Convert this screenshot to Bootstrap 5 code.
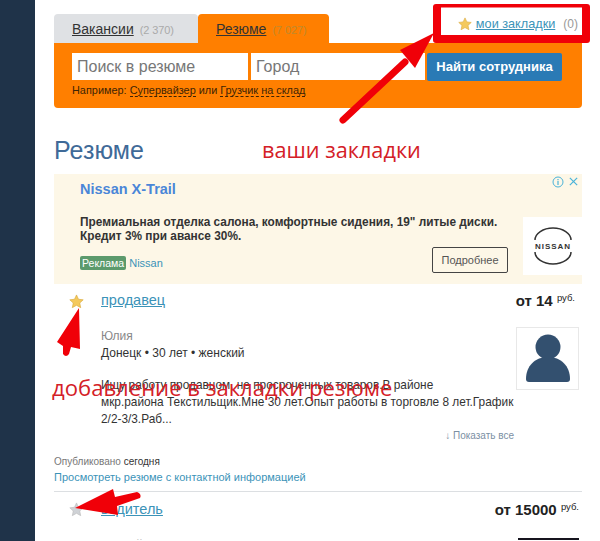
<!DOCTYPE html>
<html lang="ru">
<head>
  <meta charset="UTF-8" />
  <meta name="viewport" content="width=device-width, initial-scale=1" />
  <title>Резюме</title>
  <link href="https://cdn.jsdelivr.net/npm/bootstrap@5.3.0/dist/css/bootstrap.min.css" rel="stylesheet" />
  <style>
    html, body { height: 541px; overflow: hidden; }
    body { font-family: "Liberation Sans", Arial, sans-serif; font-size: 12px; color: #333; background: #fff; position: relative; }
    a { color: #3b93b8; }
    .side-strip { width: 35px; height: 541px; background: #1f3349; flex-shrink: 0; }
    .page-main { width: 528px; margin-left: 19px; padding-top: 14px; }
    .tab-row { height: 29px; }
    .tab-item { height: 29px; border-radius: 4px 4px 0 0; font-size: 14px; padding-top: 5px; color: #333; }
    .tab-grey { width: 144px; background: #dfe1e4; padding-left: 18px; }
    .tab-orange { width: 131px; background: #ff7f00; padding-left: 18px; }
    .tab-item a { color: #333; }
    .tab-num { font-size: 11px; color: #aaa; margin-left: 6px; letter-spacing: -.1px; }
    .tab-orange .tab-num { color: #c08a2c; }
    .bookmarks-link { margin-left: auto; padding: 2px 4px 0 0; font-size: 12.7px; line-height: 17px; height: 20px; }
    .bookmarks-link span { color: #999; margin-left: 8px; font-size: 12px; }
    .search-panel { background: #ff7f00; height: 65px; border-radius: 0 0 4px 4px; padding: 10px 20px 0 18px; }
    .search-input { width: 176px; height: 27px; padding: 0 5px; border: 0; border-radius: 0; font-size: 16px; background: #fff; }
    .search-input::placeholder { color: #777; }
    .search-input.city-input { width: 174px; margin-left: 3px; }
    .search-btn { width: 136px; height: 28px; margin-left: 2px; padding: 0; border: 0; border-radius: 2px; background: #2a7ab5; color: #fff; font-size: 13px; font-weight: 700; }
    .search-hint { font-size: 10.9px; color: #3d2405; margin-top: 2px; line-height: 14px; }
    .search-hint a { color: #3d2405; text-decoration: none; border-bottom: 1px dashed #3d2405; }
    .page-title { font-size: 25px; line-height: 30px; color: #3f6a98; margin: 27px 0 9px; font-weight: 400; }
    .ad-box { height: 110px; background: #fdf7e7; position: relative; padding: 6px 0 0 26px; }
    .ad-title { font-size: 14.5px; font-weight: 700; color: #4a86d8; line-height: 18px; }
    .ad-text { font-size: 11.85px; font-weight: 700; color: #333; line-height: 14px; margin-top: 17px; }
    .ad-foot { margin-top: 14px; line-height: 13px; font-size: 11px; }
    .ad-label { background: #5c9a6c; color: #fff; font-size: 10.5px; padding: 1px 2px; border-radius: 2px; }
    .ad-more { position: absolute; left: 378px; top: 73px; width: 76px; height: 26px; padding: 0; background: transparent; border: 1px solid #444; border-radius: 2px; font-size: 11px; color: #555; }
    .ad-logo { position: absolute; right: 0; top: 43px; width: 59px; height: 58px; background: #fff; }
    .ad-icons { position: absolute; right: 3px; top: 2px; }
    .resume-row { padding: 8px 0 0 47px; position: relative; }
    .fav-star { position: absolute; left: 15px; top: 10px; }
    .resume-title { font-size: 14.5px; line-height: 17px; }
    .resume-price { font-size: 15px; line-height: 17px; font-weight: 700; color: #222; padding-right: 7px; }
    .price-wide { padding-right: 3px; }
    .resume-price sup { font-size: 9.5px; font-weight: 400; top: -5px; }
    .resume-info { margin-top: 18px; }
    .resume-thumb { width: 63px; height: 63px; border: 1px solid #e8e8e8; flex-shrink: 0; margin-right: 3px; }
    .resume-name { color: #888; line-height: 17px; padding-top: 1px; }
    .resume-place { line-height: 17px; color: #333; }
    .resume-desc { line-height: 17px; font-size: 11.85px; white-space: nowrap; margin-top: -13px; color: #333; }
    .show-all { text-align: right; width: 413px; color: #7b8fa3; line-height: 17px; margin-top: -1px; font-size: 10px; }
    .resume-meta { font-size: 10px; color: #777; line-height: 14px; margin-top: 11px; }
    .resume-meta b { color: #333; font-weight: 400; }
    .contact-link { display: block; font-size: 11px; line-height: 16px; text-decoration: none; }
    .resume-sep { border-top: 1px solid #dcdfe2; margin-top: 6px; }
    .thumb-dark { position: absolute; right: 3px; top: 46px; width: 61px; height: 30px; background: #16141e; }
    .second-row { height: 48px; overflow: hidden; padding-top: 9px; }
    .overlay-marks { position: absolute; left: 0; top: 0; }
    .note-red { position: absolute; font-family: "Open Sans", sans-serif; color: #d42027; font-size: 21.7px; line-height: 24px; white-space: nowrap; }
    .note-top { left: 262px; top: 138px; }
    .note-bottom { left: 52px; top: 375px; font-size: 22.1px; }
  </style>
</head>
<body>
  <div class="d-flex">
    <div class="side-strip"></div>
    <div class="page-main">
      <div class="d-flex tab-row">
        <div class="tab-item tab-grey"><a href="#">Вакансии</a><span class="tab-num">(2 370)</span></div>
        <div class="tab-item tab-orange"><a href="#">Резюме</a><span class="tab-num">(7 027)</span></div>
        <div class="bookmarks-link">
          <svg width="14" height="14" viewBox="0 0 24 24" class="align-text-top"><path d="M12 1.5l3.2 6.9 7.5.9-5.5 5.1 1.5 7.4-6.7-3.7-6.7 3.7 1.5-7.4L1.3 9.3l7.5-.9z" fill="#f4c95d" stroke="#d9a93a"/></svg>
          <a href="#">мои закладки</a><span>(0)</span>
        </div>
      </div>
      <form class="search-panel">
        <div class="d-flex">
          <input class="form-control search-input" placeholder="Поиск в резюме" />
          <input class="form-control search-input city-input" placeholder="Город" />
          <button type="button" class="btn search-btn">Найти сотрудника</button>
        </div>
        <div class="search-hint">Например: <a href="#">Супервайзер</a> или <a href="#">Грузчик на склад</a></div>
      </form>

      <h1 class="page-title">Резюме</h1>

      <div class="ad-box">
        <div class="ad-title">Nissan X-Trail</div>
        <div class="ad-text">Премиальная отделка салона, комфортные сидения, 19" литые диски.<br />Кредит 3% при авансе 30%.</div>
        <div class="ad-foot"><span class="ad-label">Реклама</span> <a href="#" class="text-decoration-none">Nissan</a></div>
        <button type="button" class="btn ad-more">Подробнее</button>
        <div class="ad-logo d-flex align-items-center justify-content-center">
          <svg width="50" height="40" viewBox="0 0 50 40">
            <path d="M7 14A18 12 0 0 1 43 14M7 26A18 12 0 0 0 43 26" fill="none" stroke="#333" stroke-width="1.5"/>
            <text x="25" y="23" text-anchor="middle" font-size="8" font-weight="700" letter-spacing="1" font-family="Liberation Sans" fill="#333">NISSAN</text>
          </svg>
        </div>
        <div class="ad-icons d-flex gap-1">
          <svg width="12" height="12" viewBox="0 0 12 12"><circle cx="6" cy="6" r="5" fill="none" stroke="#4bb3d8"/><path d="M6 5v4M6 3v1.2" stroke="#4bb3d8" stroke-width="1.2"/></svg>
          <svg width="11" height="11" viewBox="0 0 12 12"><path d="M2 2l8 8M10 2l-8 8" stroke="#4bb3d8" stroke-width="1.3"/></svg>
        </div>
      </div>

      <div class="resume-row">
        <svg class="fav-star" width="15" height="15" viewBox="0 0 24 24"><path d="M12 1.5l3.2 6.9 7.5.9-5.5 5.1 1.5 7.4-6.7-3.7-6.7 3.7 1.5-7.4L1.3 9.3l7.5-.9z" fill="#f4c95d" stroke="#d9a93a"/></svg>
        <div class="d-flex justify-content-between">
          <a href="#" class="resume-title">продавец</a>
          <div class="resume-price">от 14 <sup>руб.</sup></div>
        </div>
        <div class="d-flex justify-content-between resume-info">
          <div>
            <div class="resume-name">Юлия</div>
            <div class="resume-place">Донецк • 30 лет • женский</div>
          </div>
          <div class="resume-thumb d-flex align-items-center justify-content-center">
            <svg width="46" height="50" viewBox="0 0 46 50"><circle cx="23" cy="13" r="12.5" fill="#33506f"/><path d="M1 45c0-13 9-22 22-22s22 9 22 22c0 2-1 3-3 3H4c-2 0-3-1-3-3z" fill="#33506f"/></svg>
          </div>
        </div>
        <div class="resume-desc">Ищу работу продавцом, не просроченных товаров.В районе<br />мкр.района Текстильщик.Мне 30 лет.Опыт работы в торговле 8 лет.График<br />2/2-3/3.Раб...</div>
        <div class="show-all">↓ Показать все</div>
      </div>
      <div class="resume-meta">Опубликовано <b>сегодня</b></div>
      <a href="#" class="contact-link">Просмотреть резюме с контактной информацией</a>
      <div class="resume-sep"></div>

      <div class="resume-row second-row">
        <svg class="fav-star" width="15" height="15" viewBox="0 0 24 24"><path d="M12 1.5l3.2 6.9 7.5.9-5.5 5.1 1.5 7.4-6.7-3.7-6.7 3.7 1.5-7.4L1.3 9.3l7.5-.9z" fill="#cfd2d6" stroke="#bbb"/></svg>
        <div class="d-flex justify-content-between">
          <a href="#" class="resume-title">водитель</a>
          <div class="resume-price price-wide">от 15000 <sup>руб.</sup></div>
        </div>
        <div class="resume-name resume-info">Андрей</div>
        <div class="thumb-dark"></div>
      </div>
    </div>
  </div>

  <!-- red annotations drawn over the screenshot -->
  <svg class="overlay-marks" width="600" height="541" viewBox="0 0 600 541">
    <path fill-rule="evenodd" d="M436 4H587Q590 4 590 7V40Q590 43 587 43H436Q433 43 433 40V7Q433 4 436 4zM441 7.5V35H582V7.5z" fill="#f00008"/>
    <path d="M343 120L405 62" stroke="#f00008" stroke-width="7" stroke-linecap="round"/>
    <path d="M434 33L400 50L415 68z" fill="#f00008"/>
    <path d="M79 308L57 342L63 346L63 354Q66 358 69 354L71 347L80 349z" fill="#f00008"/>
    <path d="M75 508L113 489L115 497L137 492Q142 494 140 498L117 506L118 515z" fill="#f00008"/>
  </svg>
  <div class="note-red note-top">ваши закладки</div>
  <div class="note-red note-bottom">добавление в закладки резюме</div>

  <script src="https://cdn.jsdelivr.net/npm/bootstrap@5.3.0/dist/js/bootstrap.bundle.min.js"></script>
</body>
</html>
